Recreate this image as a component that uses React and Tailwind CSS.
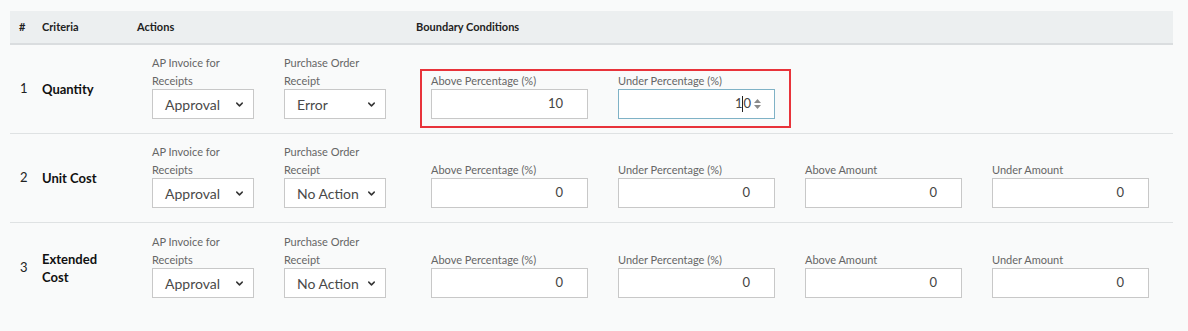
import React from 'react'
import { ChevronDown } from 'lucide-react'

const rows = [
  { n: 1, name: 'Quantity', ap: 'Approval', po: 'Error', highlight: true },
  { n: 2, name: 'Unit Cost', ap: 'Approval', po: 'No Action' },
  { n: 3, name: 'Extended Cost', ap: 'Approval', po: 'No Action', last: true },
]

function SelectBox({ label1, label2, value }) {
  return (
    <div className="w-[102px] flex flex-col">
      <div className="text-[11px] leading-[18px] text-[#666]">{label1}</div>
      <div className="text-[11px] leading-[18px] text-[#666]">{label2}</div>
      <div className="mt-[-1px] h-[30px] bg-white border border-[#c8c8c8] flex items-center justify-between pl-[12px] pr-[8px]">
        <span className="text-[14px] text-[#4a4a4a]">{value}</span>
        <ChevronDown className="w-[11px] h-[11px] text-[#333]" strokeWidth={3.2} />
      </div>
    </div>
  )
}

function NumField({ label, value, focused }) {
  return (
    <div className="w-[157px] flex flex-col">
      <div className="text-[11px] leading-[18px] text-[#666]">{label}</div>
      <div
        className={`mt-[-1px] h-[30px] bg-white border flex items-center justify-end text-[13px] text-[#444] ${
          focused ? 'border-[#7fb2c6] pr-[12px]' : 'border-[#c8c8c8] pr-[24px]'
        }`}
      >
        {focused ? (
          <>
            <span>1</span>
            <span className="w-px h-[16px] bg-[#222]" />
            <span>0</span>
            <svg width="9" height="14" viewBox="0 0 9 14" className="ml-[2px]">
              <path d="M1 6 L4.5 2 L8 6 Z" fill="#8a8a8a" />
              <path d="M1 8 L4.5 12 L8 8 Z" fill="#8a8a8a" />
            </svg>
          </>
        ) : (
          <span>{value}</span>
        )}
      </div>
    </div>
  )
}

export default function App() {
  return (
    <div
      className="w-[1188px] h-[331px] bg-[#f9fafa] pt-[11px] pl-[10px] overflow-hidden"
      style={{ fontFamily: 'Lato, "Liberation Sans", sans-serif' }}
    >
      <div className="w-[1163px]">
        {/* Header */}
        <div className="h-[34px] bg-[#eceff0] border-b-2 border-[#dadddf] flex items-center text-[11px] font-bold text-[#222]">
          <div className="w-[26px] pl-[9px]">#</div>
          <div className="w-[95px] pl-[6px]">Criteria</div>
          <div className="w-[279px] pl-[6px]">Actions</div>
          <div className="pl-[6px]">Boundary Conditions</div>
        </div>

        {rows.map((r) => (
          <div
            key={r.n}
            className={`h-[89px] flex ${r.last ? '' : 'border-b border-[#dfe2e3]'}`}
          >
            <div className="w-[26px] pl-[10px] self-center text-[13px] text-[#222]">{r.n}</div>
            <div className="w-[95px] pl-[6px] self-center text-[13px] leading-[18px] font-bold text-[#111]">
              {r.name === 'Extended Cost' ? (
                <>
                  Extended
                  <br />
                  Cost
                </>
              ) : (
                r.name
              )}
            </div>
            <div className="w-[279px] pl-[21px] self-end pb-[14px] flex gap-[30px]">
              <SelectBox label1="AP Invoice for" label2="Receipts" value={r.ap} />
              <SelectBox label1="Purchase Order" label2="Receipt" value={r.po} />
            </div>
            {r.highlight ? (
              <div className="self-end pb-[5px] pl-[10px]">
                <div className="border-2 border-[#e8333a] pl-[9px] pr-[14px] pt-[1px] pb-[7px] flex gap-[30px]">
                  <NumField label="Above Percentage (%)" value="10" />
                  <NumField label="Under Percentage (%)" value="10" focused />
                </div>
              </div>
            ) : (
              <div className="self-end pb-[14px] pl-[21px] flex gap-[30px]">
                <NumField label="Above Percentage (%)" value="0" />
                <NumField label="Under Percentage (%)" value="0" />
                <NumField label="Above Amount" value="0" />
                <NumField label="Under Amount" value="0" />
              </div>
            )}
          </div>
        ))}
      </div>
    </div>
  )
}
